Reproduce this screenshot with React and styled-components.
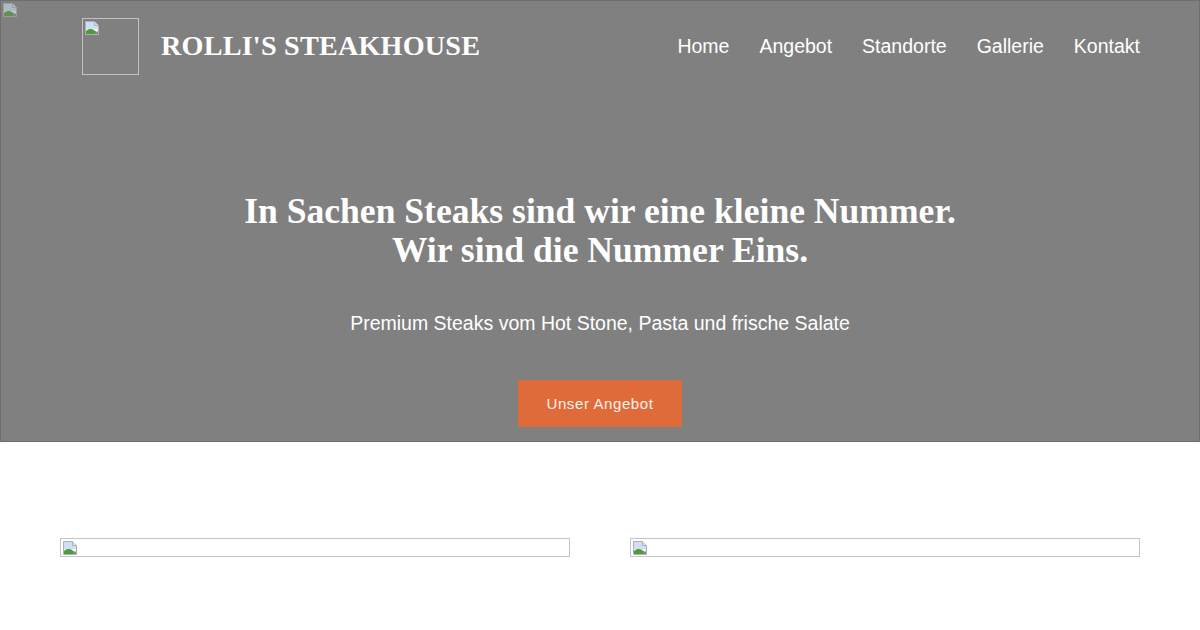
import React from "react";
import styled, { createGlobalStyle } from "styled-components";

const Global = createGlobalStyle`
  html, body { margin: 0; padding: 0; background: #ffffff; }
  body { font-family: "Liberation Sans", Arial, sans-serif; }
  * { box-sizing: border-box; }
`;

const Page = styled.div`
  width: 1200px;
  height: 630px;
  overflow: hidden;
  background: #ffffff;
`;

const Hero = styled.header`
  position: relative;
  height: 442px;
  background: #808080;
  border: 1px solid #6e6e6e;
  display: flex;
  flex-direction: column;
`;

const CornerIcon = styled.span`
  position: absolute;
  left: 1px;
  top: 1px;
  display: block;
  width: 16px;
  height: 16px;
`;

const NavBar = styled.nav`
  display: flex;
  align-items: center;
  justify-content: space-between;
  padding: 16px 59px 0 81px;
  height: 74px;
`;

const Brand = styled.div`
  display: flex;
  align-items: center;
  gap: 22px;
`;

const LogoBox = styled.div`
  width: 57px;
  height: 57px;
  border: 1px solid #c2c2c2;
  padding: 1px;
`;

const BrandName = styled.span`
  font-family: "Liberation Serif", "Times New Roman", serif;
  font-weight: 700;
  font-size: 28.2px;
  color: #ffffff;
  letter-spacing: 0.2px;
  margin-top: -1px;
`;

const Menu = styled.ul`
  display: flex;
  gap: 30px;
  list-style: none;
  margin: 0;
  padding: 0;
  margin-top: 1px;
`;

const MenuItem = styled.li`
  font-size: 19.5px;
  color: #ffffff;
`;

const HeroBody = styled.div`
  display: flex;
  flex-direction: column;
  align-items: center;
  text-align: center;
  padding-top: 117px;
`;

const Headline = styled.h1`
  margin: 0;
  font-family: "Liberation Serif", "Times New Roman", serif;
  font-weight: 700;
  font-size: 35.6px;
  line-height: 39px;
  color: #ffffff;
`;

const Sub = styled.p`
  margin: 41px 0 0;
  font-size: 19.5px;
  line-height: 24px;
  color: #ffffff;
`;

const CTA = styled.button`
  margin-top: 45px;
  width: 164px;
  height: 47px;
  border: none;
  background: #e06b3a;
  color: #fdf2ea;
  font-family: "Liberation Sans", Arial, sans-serif;
  font-size: 15px;
  letter-spacing: 0.6px;
  padding: 0;
`;

const Cards = styled.section`
  display: grid;
  grid-template-columns: 1fr 1fr;
  gap: 60px;
  padding: 96px 60px 0;
`;

const BrokenImg = styled.div`
  height: 19px;
  border: 1px solid #c4c4c4;
  padding: 1px;
`;

const Broken = ({ faded }) => (
  <svg width="16" height="16" viewBox="0 0 16 16" style={{ display: "block", opacity: faded ? 0.6 : 1 }}>
    <path d="M1.5 1.5 H10.5 L14.5 5.5 V14.5 H1.5 Z" fill="#f2f4f8" stroke="#a9b0bb" />
    <path d="M10.5 1.5 V5.5 H14.5" fill="#dfe3ea" stroke="#a9b0bb" />
    <path d="M2 2 H10 V6 H14 V9 H2 Z" fill="#cfe0f5" />
    <path d="M2 14 V11 C5 8.5 8 8.5 10.5 10.5 L13 12 L11 14 Z" fill="#4f9a3a" />
    <path d="M11 14 L14 11 V14 Z" fill="#7a7f88" />
  </svg>
);

export default function App() {
  return (
    <Page>
      <Global />
      <Hero>
        <CornerIcon>
          <Broken faded />
        </CornerIcon>
        <NavBar>
          <Brand>
            <LogoBox>
              <Broken />
            </LogoBox>
            <BrandName>ROLLI'S STEAKHOUSE</BrandName>
          </Brand>
          <Menu>
            <MenuItem>Home</MenuItem>
            <MenuItem>Angebot</MenuItem>
            <MenuItem>Standorte</MenuItem>
            <MenuItem>Gallerie</MenuItem>
            <MenuItem>Kontakt</MenuItem>
          </Menu>
        </NavBar>
        <HeroBody>
          <Headline>
            In Sachen Steaks sind wir eine kleine Nummer.
            <br />
            Wir sind die Nummer Eins.
          </Headline>
          <Sub>Premium Steaks vom Hot Stone, Pasta und frische Salate</Sub>
          <CTA>Unser Angebot</CTA>
        </HeroBody>
      </Hero>
      <Cards>
        <BrokenImg>
          <Broken />
        </BrokenImg>
        <BrokenImg>
          <Broken />
        </BrokenImg>
      </Cards>
    </Page>
  );
}
